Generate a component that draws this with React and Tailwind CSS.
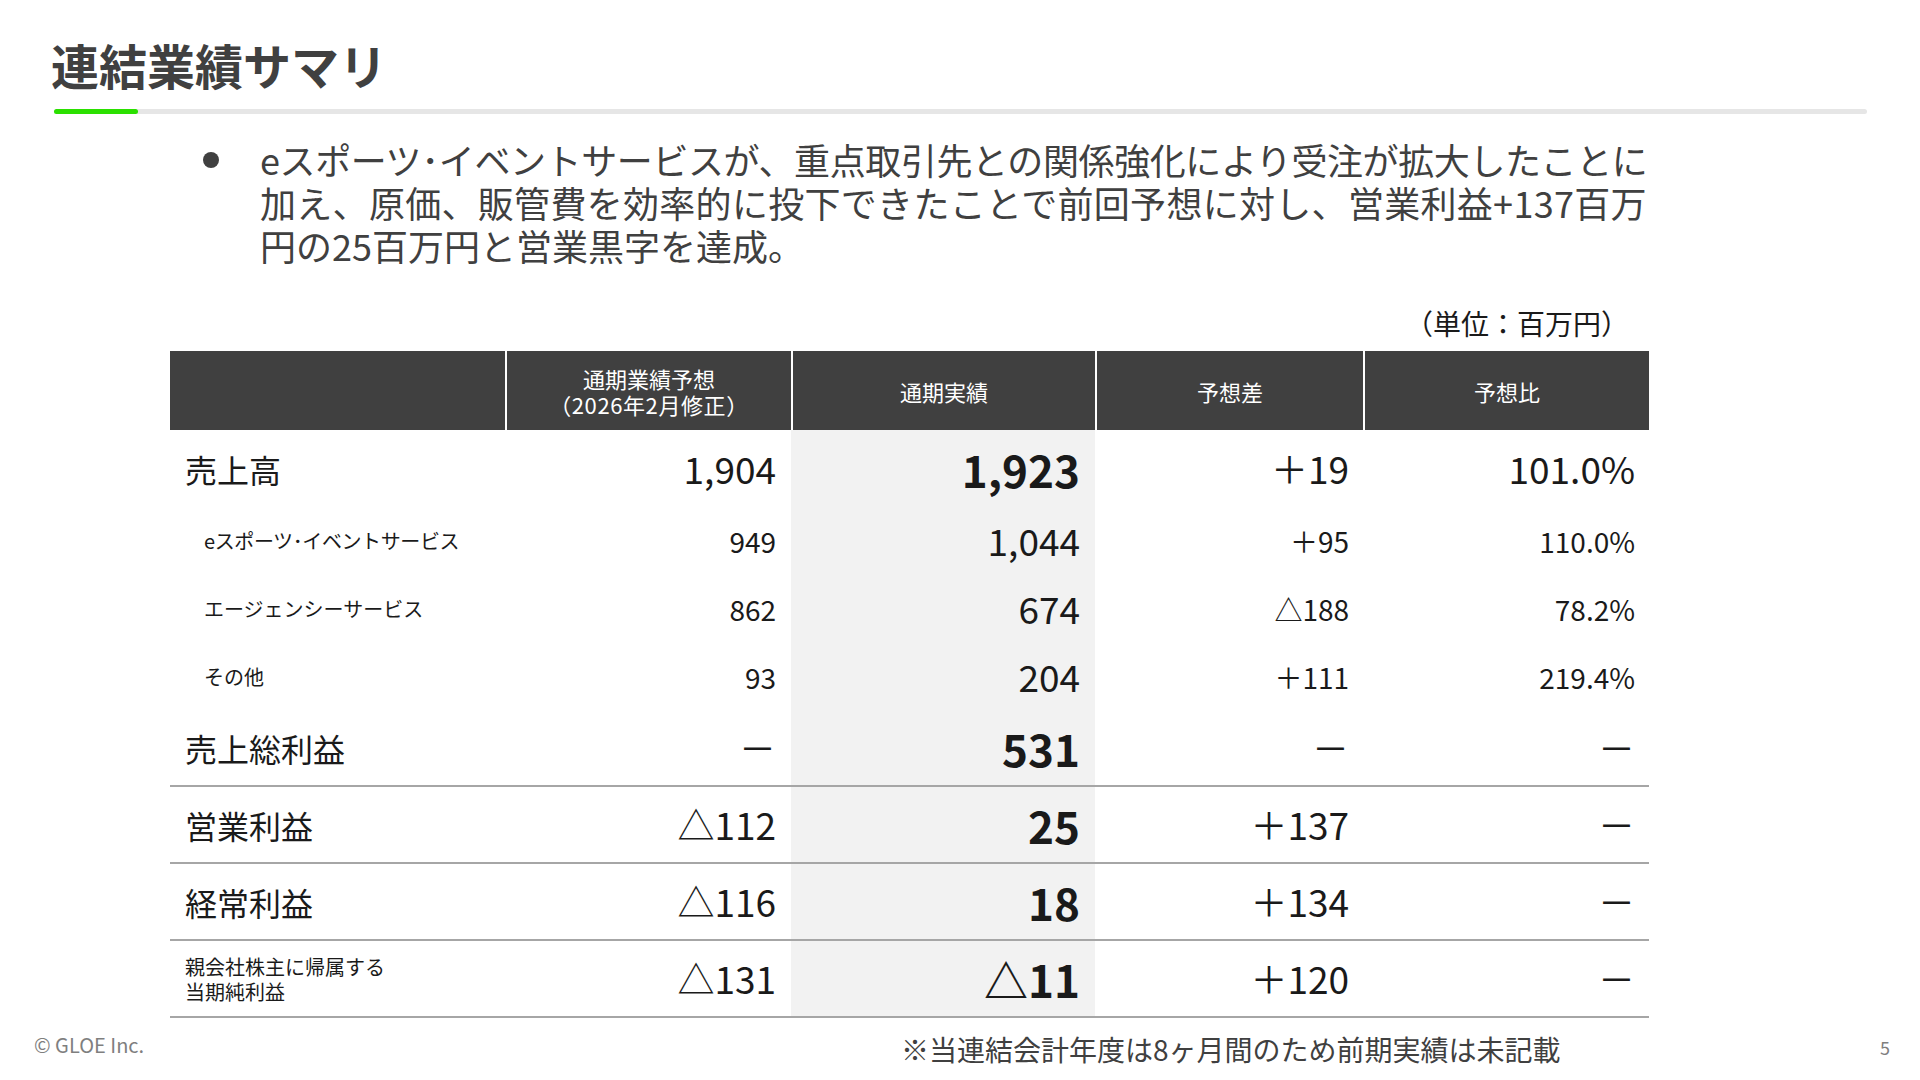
import React from "react";

const rows = [
  { label: "売上高", type: "main", c2: "1,904", c3: "1,923", c4: "＋19", c5: "101.0%", h: "h-[77px]", border: false },
  { label: "eスポーツ･イベントサービス", type: "sub", c2: "949", c3: "1,044", c4: "＋95", c5: "110.0%", h: "h-[68px]", border: false, tight: true },
  { label: "エージェンシーサービス", type: "sub", c2: "862", c3: "674", c4: "△188", c5: "78.2%", h: "h-[68px]", border: false },
  { label: "その他", type: "sub", c2: "93", c3: "204", c4: "＋111", c5: "219.4%", h: "h-[67px]", border: false },
  { label: "売上総利益", type: "main", c2: "－", c3: "531", c4: "－", c5: "－", h: "h-[77px]", border: true },
  { label: "営業利益", type: "main", c2: "△112", c3: "25", c4: "＋137", c5: "－", h: "h-[77px]", border: true },
  { label: "経常利益", type: "main", c2: "△116", c3: "18", c4: "＋134", c5: "－", h: "h-[77px]", border: true },
  { label: "親会社株主に帰属する|当期純利益", type: "two", c2: "△131", c3: "△11", c4: "＋120", c5: "－", h: "h-[77px]", border: true },
];

function Row({ r }) {
  const sub = r.type === "sub";
  const numCls = sub ? "text-[28px]" : "text-[37px]";
  const boldCls = sub ? "text-[37px] font-normal" : "text-[44px] font-bold";
  const b = r.border ? "border-b-2 border-[#a6a6a6]" : "";
  return (
    <div className={`grid grid-cols-[335px_286px_304px_268px_286px] ${r.h} ${b} text-[#1a1a1a]`}>
      <div className={`flex items-center ${sub ? "pl-[34px]" : "pl-[15px]"}`}>
        {r.type === "two" ? (
          <div className="flex flex-col text-[20px] leading-[25px]">
            {r.label.split("|").map((t) => (
              <span key={t}>{t}</span>
            ))}
          </div>
        ) : (
          <span className={`${sub ? "text-[20px]" : "text-[32px]"} ${r.tight ? "tracking-[-0.4px]" : ""}`}>{r.label}</span>
        )}
      </div>
      <div className={`flex items-center justify-end pr-[15px] ${numCls}`}>{r.c2}</div>
      <div className={`flex items-center justify-end pr-[15px] bg-[#f2f2f2] ${boldCls}`}>{r.c3}</div>
      <div className={`flex items-center justify-end pr-[14px] ${numCls}`}>{r.c4}</div>
      <div className={`flex items-center justify-end pr-[14px] ${numCls}`}>{r.c5}</div>
    </div>
  );
}

export default function App() {
  return (
    <div className="w-[1920px] h-[1080px] bg-white overflow-hidden font-['Noto_Sans_CJK_JP','Noto_Sans',sans-serif]">
      <h1 className="ml-[51px] pt-[40px] text-[48px] leading-[48px] font-bold text-[#404040]">連結業績サマリ</h1>
      <div className="ml-[54px] mt-[21px] w-[1813px] h-[5px] rounded-full bg-[#e6e6e6] flex">
        <div className="w-[84px] h-full rounded-full bg-[#2be000]" />
      </div>

      <div className="mt-[24px] flex">
        <div className="w-[260px] flex justify-end pr-[41px] pt-[14px]">
          <div className="w-[16px] h-[16px] rounded-full bg-[#404040]" />
        </div>
        <p className="text-[36px] leading-[43px] text-[#404040] whitespace-nowrap">
          <span className="tracking-[-0.4px]">eスポーツ･イベントサービスが、重点取引先との関係強化により受注が拡大したことに</span>
          <br />
          <span className="tracking-[0.3px]">加え、原価、販管費を効率的に投下できたことで前回予想に対し、営業利益+137百万</span>
          <br />
          円の25百万円と営業黒字を達成。
        </p>
      </div>

      <div className="mt-[38px] pr-[291px] text-right text-[28px] leading-[36px] text-[#1a1a1a]">（単位：百万円）</div>

      <div className="mt-[10px] ml-[170px] w-[1479px]">
        <div className="grid grid-cols-[335px_286px_304px_268px_286px] h-[79px] bg-[#404040] text-white text-[22px] leading-[26px]">
          <div />
          <div className="flex flex-col items-center justify-center border-l-2 border-white">
            <span>通期業績予想</span>
            <span className="tracking-[0.6px]">（2026年2月修正）</span>
          </div>
          <div className="flex items-center justify-center border-l-2 border-white">通期実績</div>
          <div className="flex items-center justify-center border-l-2 border-white">予想差</div>
          <div className="flex items-center justify-center border-l-2 border-white">予想比</div>
        </div>
        {rows.map((r) => (
          <Row key={r.label} r={r} />
        ))}
      </div>

      <div className="mt-[13px] flex items-start">
        <div className="ml-[34px] w-[867px] mt-[1px] text-[20px] leading-[26px] text-[#7f7f7f]">© GLOE Inc.</div>
        <div className="text-[28px] leading-[36px] text-[#404040] whitespace-nowrap">※当連結会計年度は8ヶ月間のため前期実績は未記載</div>
        <div className="ml-auto mr-[30px] text-[18px] leading-[32px] text-[#7f7f7f]">5</div>
      </div>
    </div>
  );
}
